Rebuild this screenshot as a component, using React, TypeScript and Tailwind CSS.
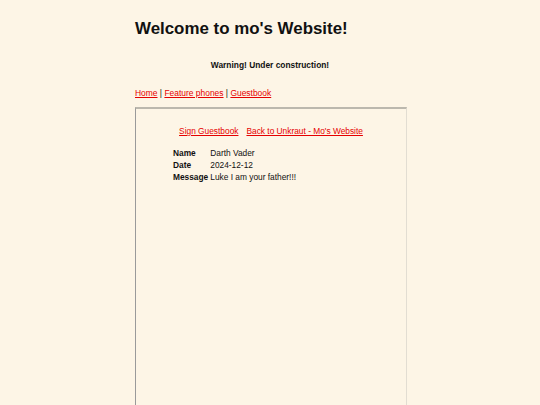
export default function App() {
  const entries = [
    { label: 'Name', value: 'Darth Vader' },
    { label: 'Date', value: '2024-12-12' },
    { label: 'Message', value: 'Luke I am your father!!!' },
  ]

  return (
    <div className="h-[405px] bg-[#fdf5e6] text-[#111] font-['Liberation_Sans',Arial,sans-serif] overflow-hidden">
      <div className="w-[270px] mx-auto pt-[19px]">
        <h1 className="text-[16.9px] leading-[20px] font-bold">Welcome to mo's Website!</h1>

        <p className="mt-[22px] text-center text-[8.4px] leading-[9.5px] font-bold">
          Warning! Under construction!
        </p>

        <nav className="mt-[18px] text-[8.45px] leading-[9.5px]">
          <a href="#" className="text-[#e60000] underline">Home</a>
          {' | '}
          <a href="#" className="text-[#e60000] underline">Feature phones</a>
          {' | '}
          <a href="#" className="text-[#e60000] underline">Guestbook</a>
        </nav>

        {/* guestbook frame */}
        <div className="mt-[9px] w-[272px] h-[320px] border-t-2 border-l border-r border-t-[#bcb8ae] border-l-[#9a9a9a] border-r-[#e2ddd2]">
          <div className="pt-[18px] text-[8.35px] leading-[9.5px]">
            <div className="text-center">
              <a href="#" className="text-[#e60000] underline">Sign Guestbook</a>
              <span className="inline-block w-[8px]"></span>
              <a href="#" className="text-[#e60000] underline">Back to Unkraut - Mo's Website</a>
            </div>

            <div className="mt-[10px] ml-[37px] grid grid-cols-[auto_1fr] gap-x-[2px]">
              {entries.map((e) => (
                <div key={e.label} className="contents">
                  <span className="font-bold leading-[12px]">{e.label}</span>
                  <span className="leading-[12px]">{e.value}</span>
                </div>
              ))}
            </div>
          </div>
        </div>
      </div>
    </div>
  )
}
